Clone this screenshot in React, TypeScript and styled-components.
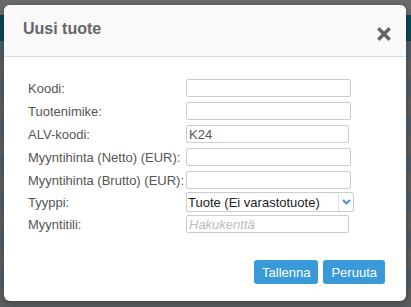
import styled, { createGlobalStyle } from 'styled-components';

const GlobalStyle = createGlobalStyle`
	html, body {
		margin: 0;
		padding: 0;
	}
	body {
		font-family: 'Liberation Sans', Arial, sans-serif;
		background: #5d5d5d;
	}
`;

const fields = [
	{ label: 'Koodi:', value: '', width: 165 },
	{ label: 'Tuotenimike:', value: '', width: 165 },
	{ label: 'ALV-koodi:', value: 'K24', width: 163 },
	{ label: 'Myyntihinta (Netto) (EUR):', value: '', width: 165 },
	{ label: 'Myyntihinta (Brutto) (EUR):', value: '', width: 165 },
];

export default function App() {
	const rows = Array.from({ length: 14 });
	return (
		<>
			<GlobalStyle />
			<Page>
				<TopStrip />
				<NavBar />
				{rows.map((_, i) => (
					<TableRow key={i} $odd={i % 2 === 1} />
				))}
			</Page>
			<Modal>
				<Header>
					<Title>Uusi tuote</Title>
					<Close aria-label="close">
						<svg width="14" height="14" viewBox="0 0 14 14">
							<path d="M2.5 2.5 L11.5 11.5 M11.5 2.5 L2.5 11.5" stroke="#666" strokeWidth="3.4" strokeLinecap="square" />
						</svg>
					</Close>
				</Header>
				<Body>
					<Form>
						{fields.map((f) => (
							<Row key={f.label}>
								<Label>{f.label}</Label>
								<Input $w={f.width} defaultValue={f.value} />
							</Row>
						))}
						<Row $tight>
							<Label>Tyyppi:</Label>
							<Select>
								<SelectText>Tuote (Ei varastotuote)</SelectText>
								<SelectArrow>
									<svg width="9" height="6" viewBox="0 0 9 6">
										<path d="M1 1 L4.5 4.5 L8 1" stroke="#3a8fd6" strokeWidth="1.8" fill="none" />
									</svg>
								</SelectArrow>
							</Select>
						</Row>
						<Row $tight>
							<Label>Myyntitili:</Label>
							<Input $w={163} placeholder="Hakukenttä" />
						</Row>
					</Form>
					<Footer>
						<Button>Tallenna</Button>
						<Button>Peruuta</Button>
					</Footer>
				</Body>
			</Modal>
		</>
	);
}

const Page = styled.div`
	display: flex;
	flex-direction: column;
	height: 307px;
	overflow: hidden;
	background: #5d5d5d;
`;

const TopStrip = styled.div`
	height: 17px;
	background: #6a6a6a;
`;

const NavBar = styled.div`
	height: 29px;
	background: #0c4455;
`;

const TableRow = styled.div<{ $odd?: boolean }>`
	flex: 0 0 19px;
	background: ${(p) => (p.$odd ? '#5d5d5d' : '#4f5b68')};
	border-bottom: 1px solid #555a60;
	box-sizing: border-box;
`;

const Modal = styled.div`
	position: absolute;
	left: 4px;
	top: 5px;
	width: 402px;
	height: 296px;
	background: #fff;
	border-radius: 6px;
	overflow: hidden;
	display: flex;
	flex-direction: column;
	box-shadow: 0 2px 6px rgba(0, 0, 0, 0.3);
`;

const Header = styled.div`
	height: 51px;
	flex: 0 0 51px;
	background: #f9f9f9;
	border-bottom: 1px solid #dedede;
	display: flex;
	align-items: flex-start;
	justify-content: space-between;
	padding: 0 15px 0 19px;
`;

const Title = styled.h3`
	margin: 0;
	padding-top: 15px;
	font-size: 16px;
	font-weight: bold;
	color: #666;
`;

const Close = styled.div`
	margin-top: 22px;
	width: 14px;
	height: 14px;
	display: flex;
`;

const Body = styled.div`
	flex: 1;
	display: flex;
	flex-direction: column;
	padding: 22px 21px 0 24px;
`;

const Form = styled.div`
	display: flex;
	flex-direction: column;
	gap: 5px;
`;

const Row = styled.div<{ $tight?: boolean }>`
	display: grid;
	grid-template-columns: 158px auto;
	align-items: center;
	margin-top: ${(p) => (p.$tight ? '-2px' : '0')};
`;

const Label = styled.span`
	font-size: 13px;
	color: #555;
	white-space: nowrap;
`;

const Input = styled.input<{ $w: number }>`
	width: ${(p) => p.$w}px;
	height: 18px;
	box-sizing: border-box;
	border: 1px solid #ccc;
	border-radius: 2px;
	padding: 0 2px;
	font-family: 'Liberation Sans', Arial, sans-serif;
	font-size: 13px;
	color: #555;
	outline: none;

	&::placeholder {
		color: #bbb;
		font-style: italic;
	}
`;

const Select = styled.div`
	width: 168px;
	height: 20px;
	box-sizing: border-box;
	border: 1px solid #ccc;
	border-radius: 2px;
	display: flex;
	align-items: center;
`;

const SelectText = styled.span`
	flex: 1;
	padding-left: 1px;
	font-size: 13px;
	color: #222;
	white-space: nowrap;
`;

const SelectArrow = styled.span`
	flex: 0 0 14px;
	height: 18px;
	border-left: 1px solid #ddd;
	display: flex;
	align-items: center;
	justify-content: center;
`;

const Footer = styled.div`
	display: flex;
	justify-content: flex-end;
	gap: 5px;
	margin-top: 27px;
`;

const Button = styled.button`
	height: 24px;
	padding: 0 8px;
	background: #3a9ad9;
	border: none;
	border-radius: 3px;
	color: #fff;
	font-family: 'Liberation Sans', Arial, sans-serif;
	font-size: 13px;
`;
